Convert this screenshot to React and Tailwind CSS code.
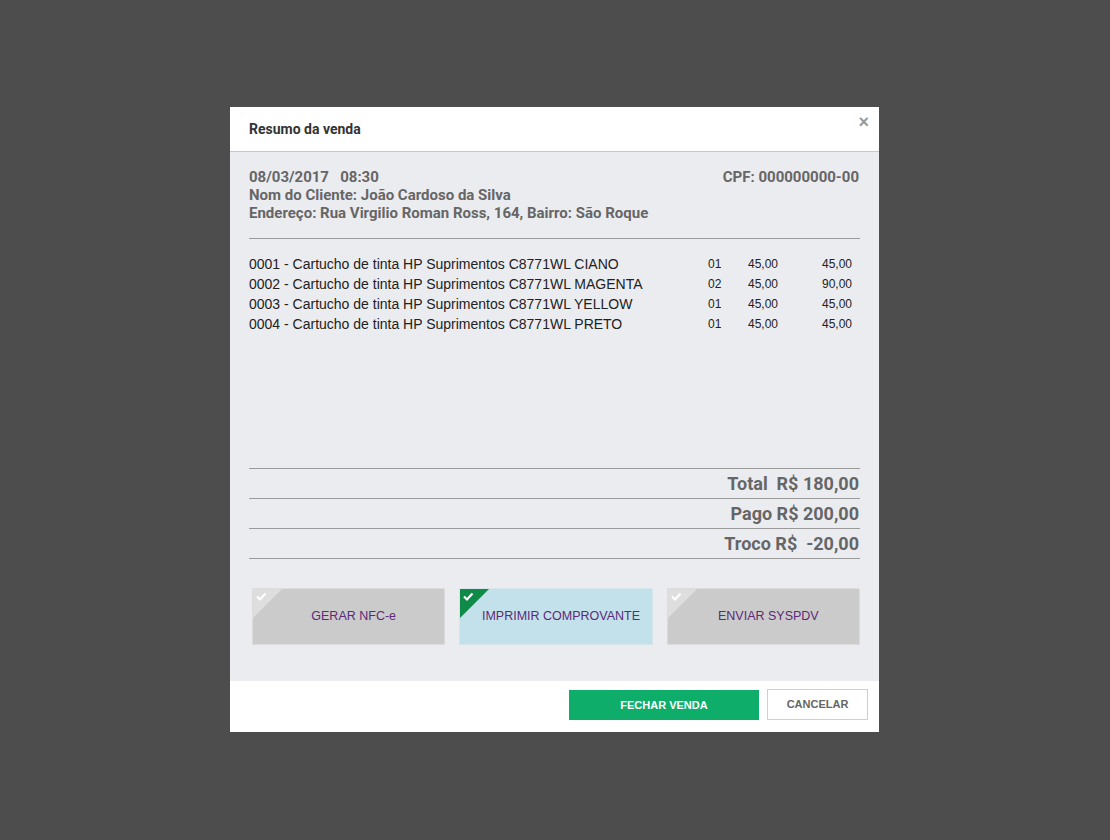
import React from "react";

// ─── Data ─────────────────────────────────────────────────────────────────────
const ITEMS = [
  { desc: "0001 - Cartucho de tinta HP Suprimentos C8771WL CIANO", qty: "01", price: "45,00", total: "45,00" },
  { desc: "0002 - Cartucho de tinta HP Suprimentos C8771WL MAGENTA", qty: "02", price: "45,00", total: "90,00" },
  { desc: "0003 - Cartucho de tinta HP Suprimentos C8771WL YELLOW", qty: "01", price: "45,00", total: "45,00" },
  { desc: "0004 - Cartucho de tinta HP Suprimentos C8771WL PRETO", qty: "01", price: "45,00", total: "45,00" },
];

const OPTIONS = [
  { label: "GERAR NFC-e", active: false },
  { label: "IMPRIMIR COMPROVANTE", active: true },
  { label: "ENVIAR SYSPDV", active: false },
];

const roboto = { fontFamily: "Roboto, 'Liberation Sans', sans-serif" };
const arial = { fontFamily: "'Liberation Sans', Arial, sans-serif" };

// ─── Option card ──────────────────────────────────────────────────────────────
const OptionCard = ({ label, active }) => (
  <div
    className={`relative w-[194px] h-[57px] flex items-center justify-center pl-[10px] border ${
      active ? "bg-[#c3e1ea] border-[#d6e6ea]" : "bg-[#cbcbcb] border-[#dcdcdc]"
    }`}
  >
    {/* corner check */}
    <svg className="absolute left-0 top-0" width="29" height="29" viewBox="0 0 29 29">
      <polygon points="0,0 29,0 0,29" fill={active ? "#0f8a48" : "#dedede"} />
      <path d="M4 7.5 L7 10.5 L12.5 4.5" fill="none" stroke="#fff" strokeWidth="2.2" />
    </svg>
    <span className="text-[12.5px] text-[#5c2a76]" style={arial}>{label}</span>
  </div>
);

// ─── App ──────────────────────────────────────────────────────────────────────
export default function App() {
  return (
    <div className="w-[1110px] h-[840px] bg-[#4d4d4d] pt-[107px] pl-[230px]">
      <div className="w-[649px] bg-white">

        {/* ── Header ── */}
        <div className="relative h-[45px] flex items-center px-[19px] border-b border-[#c8c8c8]">
          <h2 className="text-[14px] font-bold text-[#333]" style={roboto}>Resumo da venda</h2>
          <span className="absolute right-[10px] top-[2px] text-[18px] font-bold text-[#999]" style={arial}>×</span>
        </div>

        {/* ── Body ── */}
        <div className="bg-[#ebecf0] h-[529px] px-[19px] pt-[16px] flex flex-col" >
          <div className="text-[15px] font-bold text-[#666] leading-[18px]" style={roboto}>
            <div className="flex justify-between">
              <span>08/03/2017&nbsp;&nbsp;&nbsp;08:30</span>
              <span className="pr-px">CPF: 000000000-00</span>
            </div>
            <div>Nom do Cliente: João Cardoso da Silva</div>
            <div>Endereço: Rua Virgilio Roman Ross, 164, Bairro: São Roque</div>
          </div>

          <div className="mt-[16px] border-t border-[#9a9a9a]" />

          {/* items */}
          <div className="mt-[15px] h-[214px]" style={arial}>
            {ITEMS.map((it) => (
              <div key={it.desc} className="flex items-center h-[20px] text-[#222]">
                <span className="w-[459px] text-[14px]">{it.desc}</span>
                <span className="w-[40px] text-[12px]">{it.qty}</span>
                <span className="w-[74px] text-[12px]">{it.price}</span>
                <span className="w-[31px] text-[12px]">{it.total}</span>
              </div>
            ))}
          </div>

          {/* totals */}
          <div className="border-t border-[#9a9a9a] text-[18px] font-bold text-[#666]" style={roboto}>
            <div className="h-[30px] flex items-center justify-end border-b border-[#9a9a9a] pr-px">Total&nbsp;&nbsp;R$ 180,00</div>
            <div className="h-[30px] flex items-center justify-end border-b border-[#9a9a9a] pr-px">Pago R$ 200,00</div>
            <div className="h-[30px] flex items-center justify-end border-b border-[#9a9a9a] pr-px">Troco R$&nbsp;&nbsp;-20,00</div>
          </div>

          {/* options */}
          <div className="mt-[29px] flex gap-[14px] pl-[3px]">
            {OPTIONS.map((o) => (
              <OptionCard key={o.label} {...o} />
            ))}
          </div>
        </div>

        {/* ── Footer ── */}
        <div className="h-[51px] flex items-start justify-end gap-[8px] pr-[11px] pt-[8px]" style={arial}>
          <button className="mt-px w-[190px] h-[30px] bg-[#0fad6a] text-white text-[11px] font-bold">FECHAR VENDA</button>
          <button className="w-[101px] h-[31px] border border-[#cfcfcf] bg-white text-[#666] text-[11px] font-bold">CANCELAR</button>
        </div>
      </div>
    </div>
  );
}
